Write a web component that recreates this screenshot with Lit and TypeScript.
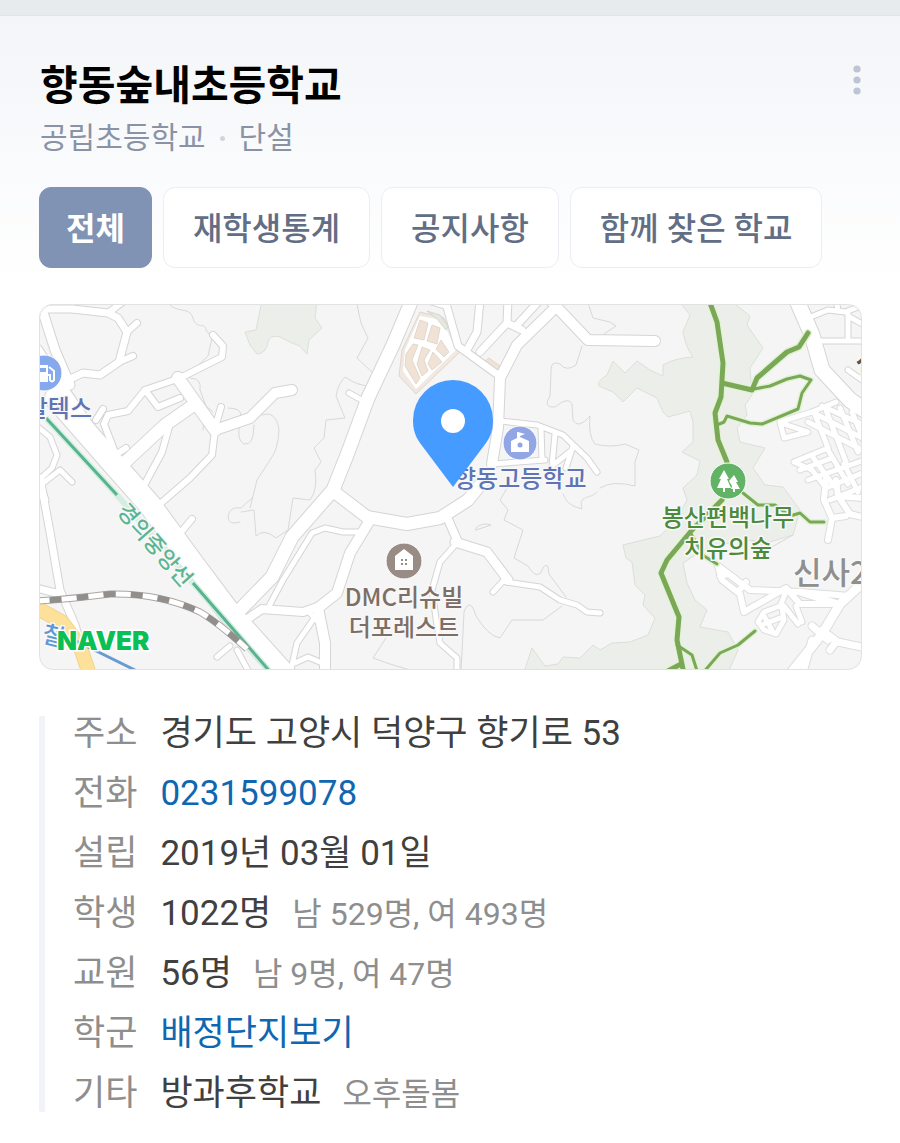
import { LitElement, html, svg, css } from "lit";
import { customElement, property, state } from "lit/decorators.js";

interface Road {
  w: number;
  d: string;
}

const PARKS = [
  "M262 300L258 320L256 330L245 332L250 345L257 354Q266 354 268 342Q270 334 280 337L292 343L300 346L307 354L309 340L322 328L315 318L317 300Z",
  "M678 300L690 315L683 332Q686 348 693 357Q675 358 663 365L663 376L650 370L637 361L625 373L613 361L607 375Q596 382 599 386L613 392L623 402L637 388L657 398L663 412L668 417L690 411L693 422L693 442L682 452L700 461L697 475L683 488L687 500L676 520L660 536L643 540L623 545L626 558L632 562L635 585L645 595L643 605L655 618L648 635L630 642L612 643L600 650L593 645L580 658L563 657L558 664L545 666L532 648L523 675H727L738 650L728 632L700 627L707 610L695 600L687 583L683 563L703 550L740 540L770 542L793 535L800 510L783 487L765 485L753 468L765 448L740 442L737 428L747 415L745 405L752 395L750 368L763 348L747 325L750 316L730 300Z",
];

const CONTOURS = [
  "M168 303C176 314 190 306 193 318S206 322 206 330L212 338L208 356Q198 366 190 372",
  "M190 378Q202 378 200 390L206 406L213 412M204 420L203 430M228 408Q242 408 241 416M240 423Q236 440 244 444Q254 446 254 425",
  "M262 415Q276 410 279 430Q278 450 270 460L257 480L250 508",
  "M356 300L361 323L368 338L357 358L374 374M370 386Q358 386 345 377Q338 384 336 396L345 418L326 420L324 438L314 448L321 462L315 470Q318 490 310 500L293 498L288 530L276 538Q264 528 256 536L254 510L241 512",
  "M587 300L593 318L610 322L616 326L604 334M582 346L576 365Q566 372 560 364Q550 360 551 372L550 396Q542 408 555 407Q568 396 572 404L573 420Q578 430 590 416Q588 436 595 444Q610 448 625 444L639 450L635 462L635 486Q612 480 600 488",
  "M563 494C568 506 574 506 582 509C578 494 590 500 597 492M510 483L500 500L508 510L504 520L523 530L514 558L528 566Q538 582 543 568Q548 560 549 574L566 597",
  "M562 606L543 620L512 620L500 638Q488 636 476 616Q470 596 464 612L461 672",
  "M476 528Q482 522 491 525L482 528L476 530Z",
  "M240 522Q228 526 228 516Q230 506 241 508L252 498",
  "M386 638L373 658L390 664L410 670L425 671M752 540L770 548L793 535",
];

const ROADS: Road[] = [
  { w: 9, d: "M41 306L55 350L70 385" },
  { w: 22, d: "M56 398L112 462L150 505L190 560L232 616L286 676" },
  { w: 12, d: "M36 350L66 395L112 462" },
  { w: 7, d: "M39 309L72 309L108 313L118 318L127 332L119 362L100 375L83 373L68 380" },
  { w: 6, d: "M127 332L137 323M119 362L133 356M108 313L124 301" },
  { w: 6, d: "M213 335L223 346L222 357L180 378L145 390L128 411L108 415L104 424L118 460M96 420L103 409M145 390L158 407L180 398M115 455L126 448" },
  { w: 12, d: "M178 378L215 430M195 404L165 425L120 467" },
  { w: 10, d: "M215 430L250 418L275 393L292 390" },
  { w: 6, d: "M215 428L221 407M215 430L212 455L190 478L153 510M169 427L162 452L140 493M177 537L192 519" },
  { w: 5, d: "M34 424L50 437L57 455L52 468L39 480L46 500M42 484L60 470L72 482M217 657L230 646M237 650L250 674M64 300L72 303" },
  { w: 7, d: "M40 478L50 532L60 590L75 625L90 674M36 588L60 594M237 614L252 602" },
  { w: 13, d: "M412 300L393 345L368 398L347 455L333 490L292 537L272 577L236 614" },
  { w: 5, d: "M349 393L367 403" },
  { w: 12, d: "M333 491L367 517L407 524L440 518L468 500L484 480" },
  { w: 10, d: "M370 520L350 553L337 593L318 608L325 643L325 676" },
  { w: 8, d: "M240 624L262 609L303 612L320 606" },
  { w: 5, d: "M268 608L283 580L312 533L325 528L343 532L363 532M315 617L297 643L290 674M295 663L308 657L322 663M310 613L320 624" },
  { w: 8, d: "M447 517L458 542" },
  { w: 5, d: "M455 545L440 562L432 590L437 625L440 643L457 658L457 676" },
  { w: 9, d: "M455 542L487 552L508 580" },
  { w: 5, d: "M506 582L540 587L560 600L577 605L587 612L600 613M505 579L493 592" },
  { w: 10, d: "M550 300L588 340L655 341M557 306L517 345L500 378L498 428L492 464" },
  { w: 7, d: "M445 300L458 346L498 375M480 300L477 332L468 348M508 300L507 323L480 352M507 323L522 330M540 300L517 325M428 300L445 305" },
  { w: 5, d: "M500 421L537 425L563 435L587 458L597 472M541 428L542 460M555 434L552 466L572 450M573 446L566 468M492 464L545 460" },
  { w: 15, d: "M795 296L812 335L822 370L850 400L870 414" },
  { w: 5, d: "M816 341L866 341M808 318L828 310L845 312L866 304M848 312L848 340M848 316L866 326M836 300L838 310M848 370L862 380" },
];

const LANES: Road[] = [
  { w: 5, d: "M836 402L812 412L780 422L784 438L808 432L784 424M812 412L870 442M808 422L870 454M822 406L870 428M814 412L828 448M826 410L846 462M840 408L858 452M852 412L866 446" },
  { w: 5, d: "M794 462L828 448M800 470L832 458M808 480L870 458M794 462L812 470L826 488M812 456L834 486M828 450L848 484M844 464L858 492M826 488L870 470M830 500L870 484" },
  { w: 6, d: "M826 478L824 500L832 518L828 540M836 480L838 496L862 498M838 496L850 514L866 518M832 518L846 516" },
  { w: 6, d: "M718 566L750 590L800 592L850 596M718 566L722 580L740 594L744 612L754 606M720 576L728 574M744 612L786 588L800 604L832 604M738 592L746 582" },
  { w: 5, d: "M786 592L780 606L764 612L758 622L764 630L776 634L784 620L782 608M764 616L772 630M764 624L780 618M784 606L798 624M796 606L802 622" },
  { w: 9, d: "M866 580L840 604L822 634L790 674" },
  { w: 7, d: "M800 592L838 604M822 630L838 642L866 648M812 640L802 676M812 626L828 640M836 642L830 650" },
];

const TRAILS: Road[] = [
  { w: 5, d: "M709 300L717 322L723 363L721 397L715 413L718 440L727 462M722 383L752 390L757 378L787 352L799 347L808 333M722 500L692 530L667 560L661 573L679 617L677 640L684 674M664 673L681 664" },
  { w: 3, d: "M754 389L770 386L787 379L800 376L811 380L802 393L798 409L762 424L750 423L727 416L724 422L717 425" },
  { w: 3, d: "M743 493L758 505L775 505L790 516L800 513L810 522L824 522M690 532L704 556L717 564M677 645L692 655L698 674M702 674L720 653L738 645L755 631" },
];

const BLOCKS = [
  "M420 320L428 323L424 340L414 338Z",
  "M432 325L440 328L437 344L427 341Z",
  "M413 344L418 345L412 360L420 378L416 384L405 366L406 354Z",
  "M422 347L430 350L424 360L428 371L422 376L417 364Z",
  "M433 352L442 362L432 370L428 364Z",
  "M441 340L449 352L444 357L436 349Z",
  "M489 358L500 366L497 370L485 361Z",
];

@customElement("school-map")
class SchoolMap extends LitElement {
  static styles = css`
    :host {
      display: block;
      border-radius: 14px;
      overflow: hidden;
      background: #f5f5f5;
    }
    svg {
      display: block;
      width: 100%;
      height: auto;
    }
    .line {
      fill: none;
      stroke-linejoin: round;
      stroke-linecap: round;
    }
    .flat {
      fill: none;
      stroke-linecap: butt;
    }
    .park {
      fill: #ecefe9;
      stroke: #dcdfd8;
    }
    .contour {
      stroke: #d8d8d8;
    }
    .casing {
      stroke: #d6d4d5;
    }
    .lane {
      stroke: #dddddd;
    }
    .road {
      stroke: #fff;
    }
    .trail {
      stroke: #7aa857;
    }
    .trail-edge {
      stroke: #e2f3d5;
    }
    .label {
      font-family: "Noto Sans CJK KR", sans-serif;
      font-size: 24px;
      font-weight: 500;
      stroke: #f8f8f8;
      stroke-width: 3px;
      stroke-linejoin: round;
      paint-order: stroke;
    }
    .blue {
      fill: #5f74b4;
    }
    .brown {
      fill: #7d6e66;
    }
    .green {
      fill: #4c8a3c;
    }
    .rail {
      fill: #5cb592;
      font-size: 22px;
    }
    .metro {
      fill: #5f97d4;
    }
    .district {
      fill: #8f8f8f;
      font-size: 31px;
    }
    .dark {
      fill: #555;
    }
    .brand {
      font-family: Inter, sans-serif;
      font-size: 26px;
      font-weight: 900;
      fill: #0abf53;
      stroke: #fff;
      stroke-width: 3px;
      paint-order: stroke;
    }
  `;

  render() {
    return html`
      <svg viewBox="39 304 823 366" role="img" aria-label="학교 위치 지도">
        <rect x="39" y="304" width="823" height="366" fill="#f5f5f5" />
        ${PARKS.map((d) => svg`<path class="park" d=${d} />`)}
        ${CONTOURS.map((d) => svg`<path class="line contour" d=${d} />`)}
        <path d="M420 312L444 318L462 350L416 394L399 376L402 350Z" fill="#f1e8e1" stroke="#e0d6cf" />
        <path d="M420 316L442 320L456 350L416 389L403 371L405 350Z" fill="#fff" />
        ${BLOCKS.map((d) => svg`<path d=${d} fill="#f0e2d5" stroke="#ddd2c8" stroke-width=".8" />`)}
        ${ROADS.map((r) => svg`<path class="line casing" stroke-width=${r.w + 2} d=${r.d} />`)}
        ${LANES.map((r) => svg`<path class="line lane" stroke-width=${r.w + 2} d=${r.d} />`)}
        ${ROADS.map((r) => svg`<path class="line road" stroke-width=${r.w} d=${r.d} />`)}
        ${LANES.map((r) => svg`<path class="line road" stroke-width=${r.w} d=${r.d} />`)}
        <path d="M30 604L62 622L80 646L90 676" class="flat" stroke="#efd58c" stroke-width="15" />
        <path d="M30 604L62 622L80 646L90 676" class="flat" stroke="#fde09a" stroke-width="13" />
        <path d="M427 311L440 315L448 326L446 330L437 319Z" fill="#e6e8e0" stroke="#cfcfc8" stroke-width=".8" />
        <path d="M74 640L137 671" class="flat" stroke="#6a9ad2" stroke-width="3" />
        <path d="M46 418L117 495L193 583L272 674" class="flat" stroke="#d4eee3" stroke-width="6" />
        <path d="M46 418L117 495M193 583L272 674" class="flat" stroke="#58b48e" stroke-width="3" />
        <path d="M37 601Q70 599 110 594Q160 593 200 612Q220 624 247 649" class="flat" stroke="#aaa6a4" stroke-width="7" />
        <path d="M37 601Q70 599 110 594Q160 593 200 612Q220 624 247 649" class="flat" stroke="#fff" stroke-width="5" />
        <path d="M37 601Q70 599 110 594Q160 593 200 612Q220 624 247 649" class="flat" stroke="#918e8c" stroke-width="6" stroke-dasharray="12 15" stroke-dashoffset="-13" />
        ${TRAILS.map((r) => svg`<path class="line trail-edge" stroke-width=${r.w + 3} d=${r.d} />`)}
        ${TRAILS.map((r) => svg`<path class="line trail" stroke-width=${r.w} d=${r.d} />`)}

        <circle cx="44" cy="373" r="18" fill="#86a8ec" stroke="#fff" />
        <path d="M37 365H48V382H37Z" fill="#fff" />
        <path d="M49 367L54 371V380Q52 383 50 380V375H48" fill="none" stroke="#fff" stroke-width="2" />
        <path d="M39 368H46V372H39Z" fill="#86a8ec" />
        <text class="label blue" x="92" y="417" text-anchor="end">칼텍스</text>
        <text class="label rail" text-anchor="middle" transform="translate(149 550) rotate(49)">경의중앙선</text>
        <text class="label metro" x="42" y="644" transform="rotate(14 52 638)">철</text>

        <circle cx="520" cy="443" r="17" fill="#92a5e4" stroke="#fff" />
        <path d="M511 452V441L517 438V432H518L525 434L520 436V437L529 441V452Z" fill="#fff" />
        <circle cx="520" cy="445" r="2.5" fill="#92a5e4" />
        <text class="label blue" x="454" y="487">향동고등학교</text>

        <circle cx="404" cy="561" r="18" fill="#998c84" stroke="#fff" />
        <path d="M395 570V556L404 549L413 556V570Z" fill="#fff" />
        <path d="M401 559h2v2h-2zM405 559h2v2h-2zM401 563h2v2h-2zM405 563h2v2h-2z" fill="#998c84" />
        <text class="label brown" x="404" y="606" text-anchor="middle">DMC리슈빌</text>
        <text class="label brown" x="404" y="636" text-anchor="middle">더포레스트</text>

        <circle cx="728" cy="481" r="18" fill="#62b365" stroke="#fff" />
        <path d="M724 470L729 479H727L731 488H725V492H723V488H717L721 479H719ZM734 475L738 482H736L740 489H735V492H733V489H731L732 486L729 481Z" fill="#fff" />
        <text class="label green" x="728" y="526" text-anchor="middle">봉산편백나무</text>
        <text class="label green" x="728" y="557" text-anchor="middle">치유의숲</text>
        <text class="label district" x="793" y="584">신사2</text>
        <text class="label district dark" x="855" y="373">신</text>

        <path d="M453 487L420 443C415 436 413 429 413 420A40 40 0 0 1 493 420C493 429 491 436 486 443Z" fill="#459bff" />
        <circle cx="453" cy="421" r="12" fill="#fff" />
        <text class="brand" x="57" y="650">NAVER</text>
        <rect x="39.5" y="304.5" width="822" height="365" rx="14" fill="none" stroke="#e2e2e2" />
      </svg>
    `;
  }
}

interface Fact {
  label: string;
  value: string;
  note?: string;
  href?: string;
}

@customElement("school-facts")
class SchoolFacts extends LitElement {
  @property({ attribute: false }) facts: Fact[] = [];

  static styles = css`
    :host {
      display: block;
    }
    .list {
      display: grid;
      gap: 24px;
      margin: 0;
      padding-left: 28px;
      border-left: 6px solid #f2f3f9;
      border-radius: 2px;
    }
    .row {
      display: grid;
      grid-template-columns: auto 1fr;
      column-gap: 23px;
      line-height: 36px;
      font-size: 35px;
    }
    .label {
      color: #8e8e8e;
      white-space: nowrap;
    }
    .body {
      display: flex;
      flex-wrap: wrap;
      align-items: baseline;
      column-gap: 21px;
      margin: 0;
      color: #404040;
    }
    .link {
      color: #0f67b1;
      text-decoration: none;
    }
    .note {
      font-size: 32px;
      color: #8e8e8e;
    }
  `;

  render() {
    return html`
      <dl class="list">
        ${this.facts.map(
          (f) => html`
            <div class="row">
              <dt class="label">${f.label}</dt>
              <dd class="body">
                ${f.href ? html`<a class="link" href=${f.href}>${f.value}</a>` : html`<span>${f.value}</span>`}
                ${f.note ? html`<span class="note">${f.note}</span>` : null}
              </dd>
            </div>
          `
        )}
      </dl>
    `;
  }
}

@customElement("app-root")
class AppRoot extends LitElement {
  @state() private tab = 0;

  private tabs = ["전체", "재학생통계", "공지사항", "함께 찾은 학교"];

  private facts: Fact[] = [
    { label: "주소", value: "경기도 고양시 덕양구 향기로 53" },
    { label: "전화", value: "0231599078", href: "tel:0231599078" },
    { label: "설립", value: "2019년 03월 01일" },
    { label: "학생", value: "1022명", note: "남 529명, 여 493명" },
    { label: "교원", value: "56명", note: "남 9명, 여 47명" },
    { label: "학군", value: "배정단지보기", href: "#zone" },
    { label: "기타", value: "방과후학교", note: "오후돌봄" },
  ];

  static styles = css`
    :host {
      display: block;
      font-family: Roboto, "Noto Sans CJK KR", sans-serif;
      background: #fff;
    }
    .strip {
      height: 15px;
      background: #e8ebee;
      border-bottom: 1px solid #e0e4ec;
    }
    .card {
      padding: 44px 38px 28px 39px;
      background: linear-gradient(#f4f5f8, #f9fafc 130px, #fff 270px);
    }
    .head {
      display: flex;
      justify-content: space-between;
      align-items: flex-start;
    }
    .names {
      padding-left: 1px;
    }
    .title {
      margin: 0;
      font-size: 41px;
      font-weight: 700;
      line-height: 52px;
      color: #000;
    }
    .kind {
      display: flex;
      align-items: center;
      gap: 14px;
      margin: 8px 0 0;
      font-size: 30px;
      line-height: 36px;
      color: #8a93a5;
    }
    .dot {
      width: 5px;
      height: 5px;
      border-radius: 50%;
      background: #d0d5de;
    }
    .more {
      display: grid;
      justify-items: center;
      padding: 4px 1px;
      border: 0;
      background: none;
    }
    .tabs {
      display: flex;
      flex-wrap: wrap;
      gap: 11px;
      margin: 31px 0 36px;
    }
    .tab {
      padding: 3px 29px 0;
      border: 1px solid #eaedf3;
      border-radius: 12px;
      background: #fff;
      font-family: inherit;
      font-size: 32px;
      font-weight: 500;
      line-height: 76px;
      color: #616e85;
    }
    .tab.on {
      padding: 3px 26px 0;
      border-color: #8193b5;
      background: #8193b5;
      font-weight: 700;
      color: #fff;
    }
    .facts {
      margin-top: 46px;
    }
  `;

  render() {
    return html`
      <div class="strip"></div>
      <main class="card">
        <header class="head">
          <div class="names">
            <h1 class="title">향동숲내초등학교</h1>
            <p class="kind"><span>공립초등학교</span><span class="dot"></span><span>단설</span></p>
          </div>
          <button class="more" aria-label="더보기">
            <svg width="8" height="32" viewBox="0 0 8 32" fill="#bcc4d6">
              <circle cx="4" cy="5" r="3.6" />
              <circle cx="4" cy="16" r="3.6" />
              <circle cx="4" cy="27" r="3.6" />
            </svg>
          </button>
        </header>
        <nav class="tabs">
          ${this.tabs.map(
            (t, i) => html`<button class="tab ${i === this.tab ? "on" : ""}" @click=${() => (this.tab = i)}>${t}</button>`
          )}
        </nav>
        <school-map></school-map>
        <school-facts class="facts" .facts=${this.facts}></school-facts>
      </main>
    `;
  }
}
